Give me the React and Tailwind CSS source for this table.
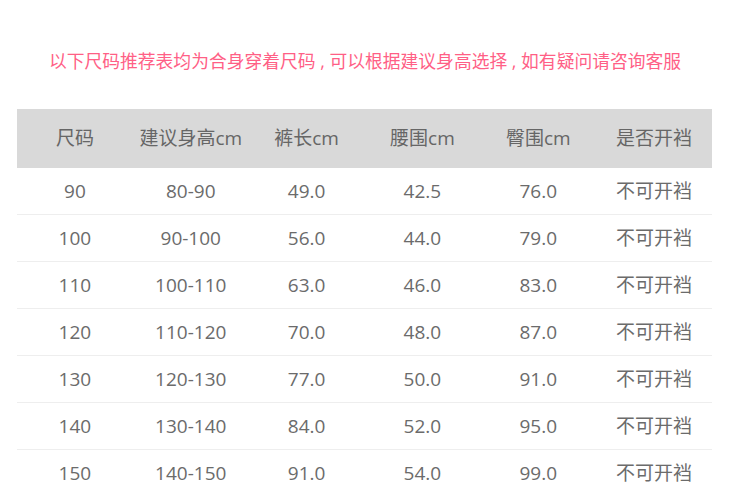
const headers = ["尺码", "建议身高cm", "裤长cm", "腰围cm", "臀围cm", "是否开裆"];

const rows = [
  ["90", "80-90", "49.0", "42.5", "76.0", "不可开裆"],
  ["100", "90-100", "56.0", "44.0", "79.0", "不可开裆"],
  ["110", "100-110", "63.0", "46.0", "83.0", "不可开裆"],
  ["120", "110-120", "70.0", "48.0", "87.0", "不可开裆"],
  ["130", "120-130", "77.0", "50.0", "91.0", "不可开裆"],
  ["140", "130-140", "84.0", "52.0", "95.0", "不可开裆"],
  ["150", "140-150", "91.0", "54.0", "99.0", "不可开裆"],
];

export default function App() {
  return (
    <div
      className="w-[730px] h-[496px] overflow-hidden bg-white"
      style={{ fontFamily: '"Open Sans", "Noto Sans CJK SC", sans-serif' }}
    >
      {/* Notice */}
      <div className="h-[109px] pt-[48px]">
        <p className="text-center text-[17.8px] leading-[26px] text-[#ff5f86]">
          以下尺码推荐表均为合身穿着尺码 , 可以根据建议身高选择 , 如有疑问请咨询客服
        </p>
      </div>

      {/* Size table */}
      <div className="ml-[17px] w-[695px]">
        <div className="grid grid-cols-6 h-[59px] bg-[#d9d9d9] items-center text-[19px] text-[#666]">
          {headers.map((h) => (
            <div key={h} className="text-center">
              {h}
            </div>
          ))}
        </div>
        {rows.map((row) => (
          <div
            key={row[0]}
            className="grid grid-cols-6 h-[47px] items-center border-b border-[#eeeeee] text-[19px] text-[#6b6b6b]"
          >
            {row.map((cell, i) => (
              <div key={i} className="text-center">
                {cell}
              </div>
            ))}
          </div>
        ))}
      </div>
    </div>
  );
}
